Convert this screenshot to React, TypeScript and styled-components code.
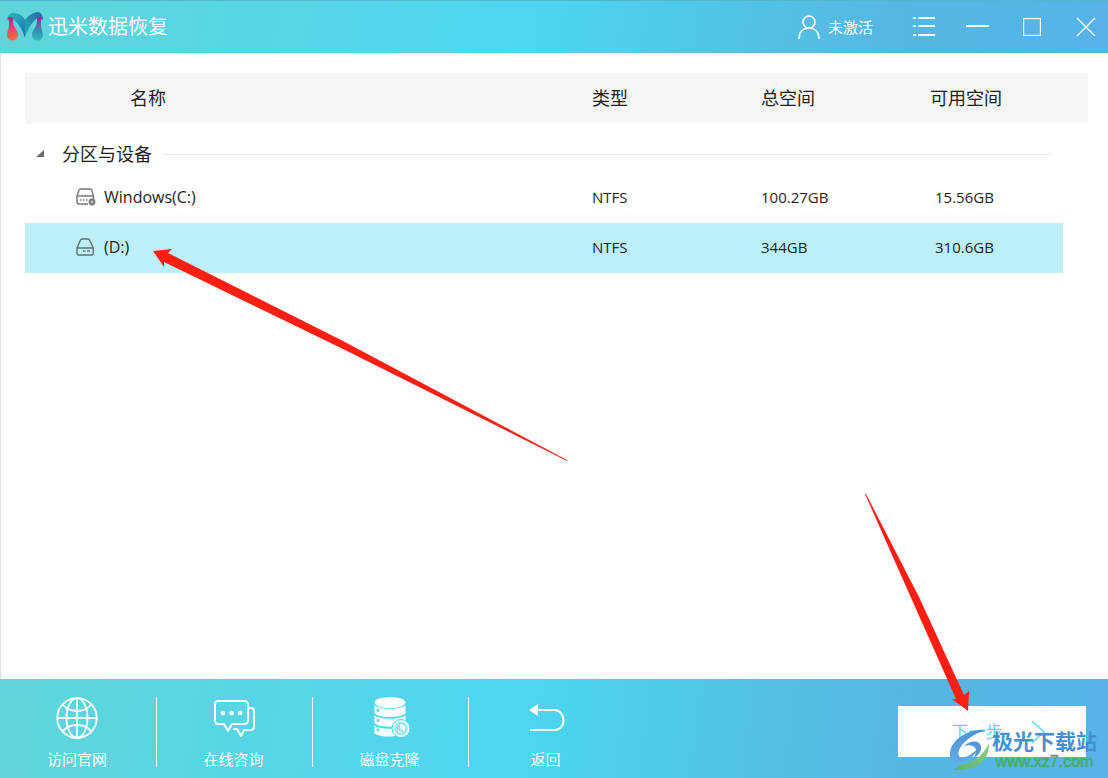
import React from "react";
import styled, { createGlobalStyle, css } from "styled-components";

const GlobalStyle = createGlobalStyle`
  *, *::before, *::after { box-sizing: border-box; }
  body {
    margin: 0;
    background: #fff;
    color: #1e1e1e;
    font-family: "Open Sans", "Noto Sans CJK SC", sans-serif;
  }
`;

const barGradient =
  "linear-gradient(98deg, #60d4d9 0%, #5ad5e1 16%, #4fd6ef 44%, #4dd2ee 52%, #52c4e5 66%, #56b6e1 82%, #57b3e9 100%)";

const Window = styled.div`
  position: relative;
  display: flex;
  flex-direction: column;
  min-height: 100vh;
  overflow: hidden;
`;

const TitleBar = styled.header`
  display: flex;
  align-items: center;
  height: 53px;
  padding: 0 8px 0 6px;
  border-top: 1px solid #52b6cf;
  background: ${barGradient};
  color: #fff;
`;

const AppTitle = styled.h1`
  flex: 1;
  margin: 0 0 0 4px;
  font-size: 20px;
  line-height: 28px;
  font-weight: 400;
`;

const plainButton = css`
  display: flex;
  align-items: center;
  justify-content: center;
  padding: 0;
  border: 0;
  background: none;
  color: inherit;
  font-family: inherit;
  cursor: pointer;
`;

const AccountButton = styled.button`
  ${plainButton}
  gap: 8px;
  margin-right: 37px;
  font-size: 15px;
  line-height: 20px;
  font-weight: 400;
`;

const WindowControls = styled.div`
  display: flex;
  gap: 26px;
`;

const ControlButton = styled.button`
  ${plainButton}
  width: 28px;
  height: 28px;
`;

const Content = styled.main`
  flex: 1;
  padding: 20px 20px 24px 24px;
  border-left: 1px solid #e2e2e2;
`;

const DriveTable = styled.table`
  width: 100%;
  border-collapse: collapse;
  table-layout: fixed;
`;

const NameCol = styled.col``;
const ValueCol = styled.col`
  width: 169px;
`;
const FreeCol = styled.col`
  width: 133px;
`;
const EdgeCol = styled.col`
  width: 25px;
`;

const HeadCell = styled.th<{ $indent?: number }>`
  height: 50px;
  padding: 0 0 0 ${(p) => p.$indent ?? 0}px;
  background: #f5f5f5;
  font-size: 18px;
  line-height: 24px;
  font-weight: 400;
  text-align: left;
`;

const GroupCell = styled.th`
  height: 50px;
  padding: 0 12px 0 10px;
  font-size: 18px;
  font-weight: 400;
  text-align: left;
`;

const GroupToggle = styled.button`
  ${plainButton}
  width: 100%;
  margin-top: 12px;
  font-size: 18px;
  line-height: 24px;

  &::after {
    content: "";
    flex: 1;
    height: 1px;
    margin-left: 10px;
    background: #ebebeb;
  }
`;

const GroupName = styled.span`
  margin-left: 16px;
`;

const DriveRow = styled.tr<{ $selected?: boolean }>`
  td:not(:last-child) {
    background: ${(p) => (p.$selected ? "#bdf0f6" : "transparent")};
  }
`;

const Cell = styled.td<{ $indent?: number }>`
  height: 50px;
  padding: 0 0 2px ${(p) => p.$indent ?? 0}px;
  font-size: 15px;
  line-height: 20px;
`;

const DriveName = styled.span`
  display: flex;
  align-items: center;
  gap: 8px;
  font-size: 16px;
`;

const BottomBar = styled.footer`
  display: flex;
  align-items: center;
  justify-content: space-between;
  height: 99px;
  padding-right: 22px;
  background: ${barGradient};
  color: #fff;
`;

const Tools = styled.nav`
  display: flex;
`;

const toolItem = css`
  ${plainButton}
  flex-direction: column;
  justify-content: flex-start;
  gap: 10px;
  width: 156px;
  height: 70px;
  margin-top: 6px;
  padding-right: 2px;
  font-size: 15px;
  line-height: 20px;
  font-weight: 400;
  text-decoration: none;

  svg {
    flex: none;
  }
`;

const ToolLink = styled.a`
  ${toolItem}
`;

const ToolButton = styled.button`
  ${toolItem}
  border-left: 1px solid #e6fafd;
`;

const NextButton = styled.button`
  ${plainButton}
  gap: 28px;
  width: 188px;
  height: 51px;
  margin-top: 6px;
  padding-left: 12px;
  background: #fff;
  color: #5fd6ec;
  font-size: 17px;
  line-height: 24px;
  font-weight: 400;
`;

const Pointer = styled.svg`
  position: absolute;
  pointer-events: none;
  fill: #ff1f12;
`;

const RowPointer = styled(Pointer)`
  left: 153px;
  top: 249px;
`;

const NextPointer = styled(Pointer)`
  right: 135px;
  bottom: 65px;
`;

const Watermark = styled.div`
  position: absolute;
  right: 11px;
  bottom: 7px;
  display: flex;
  align-items: center;
  gap: 1px;
  pointer-events: none;
`;

const WatermarkText = styled.div`
  display: flex;
  flex-direction: column;
  color: #4590d2;
  font-size: 21px;
  line-height: 24px;
  font-weight: 700;
`;

const WatermarkSite = styled.span`
  color: #46ad62;
  font-family: "Liberation Sans", Arial, sans-serif;
  font-size: 16px;
  line-height: 18px;
  font-weight: 400;
  text-align: center;
  -webkit-text-stroke: 0.5px #46ad62;
`;

const Logo = () => (
  <svg width="38" height="32" viewBox="0 0 38 32" aria-hidden="true">
    <defs>
      <linearGradient id="wingL" x1="0" y1="0" x2="1" y2="1">
        <stop offset="0" stopColor="#1fc2b8" />
        <stop offset="0.5" stopColor="#2a96bb" />
        <stop offset="1" stopColor="#2470ad" />
      </linearGradient>
      <linearGradient id="wingR" x1="0" y1="1" x2="1" y2="0">
        <stop offset="0" stopColor="#25b7b9" />
        <stop offset="1" stopColor="#2863a9" />
      </linearGradient>
      <linearGradient id="dropL" x1="0" y1="0" x2="0" y2="1">
        <stop offset="0" stopColor="#b01f91" />
        <stop offset="0.45" stopColor="#ee3c78" />
        <stop offset="1" stopColor="#fb7138" />
      </linearGradient>
      <linearGradient id="dropR" x1="0" y1="0" x2="0" y2="1">
        <stop offset="0" stopColor="#a3248f" />
        <stop offset="0.45" stopColor="#447daf" />
        <stop offset="1" stopColor="#25beb6" />
      </linearGradient>
    </defs>
    <path d="M1 9C1 4 5 1 9 2C14 3 18 6 19 9V27C17 20 13 13 7 8Z" fill="url(#wingL)" />
    <path d="M19 27V9C22 5 27 1 32 1C36 2 37 5 37 9L32 7C26 10 22 18 19 27Z" fill="url(#wingR)" />
    <path d="M2 6C5 5 7 6 7 9C7 17 12 18 12 24A5.500 5.500 0 0 1 1 24C1 19 5 16 2 6Z" fill="url(#dropL)" />
    <path d="M36 6C33 5 31 6 31 9C31 17 26 18 26 24A5.500 5.500 0 0 0 37 24C37 19 33 16 36 6Z" fill="url(#dropR)" />
  </svg>
);

const UserIcon = () => (
  <svg width="22" height="26" viewBox="0 0 22 26" fill="none" stroke="currentColor" strokeWidth="1.7" aria-hidden="true">
    <circle cx="11" cy="8" r="6" />
    <path d="M1 25C1 18 5 14 11 14S21 18 21 25" />
  </svg>
);

const MenuIcon = () => (
  <svg width="24" height="22" viewBox="0 0 24 22" fill="none" stroke="currentColor" strokeWidth="2" aria-hidden="true">
    <path d="M6 2H23M6 10H23M6 19H23M1 2H4M1 10H4M1 19H4" />
  </svg>
);

const MinimizeIcon = () => (
  <svg width="24" height="22" viewBox="0 0 24 22" stroke="currentColor" strokeWidth="2" aria-hidden="true">
    <path d="M0 10H23" />
  </svg>
);

const MaximizeIcon = () => (
  <svg width="18" height="18" viewBox="0 0 18 18" fill="none" stroke="currentColor" strokeWidth="1.2" aria-hidden="true">
    <rect x="0.6" y="0.6" width="16.8" height="16.8" />
  </svg>
);

const CloseIcon = () => (
  <svg width="20" height="20" viewBox="0 0 20 20" stroke="currentColor" strokeWidth="1.4" aria-hidden="true">
    <path d="M1 1L19 19M19 1L1 19" />
  </svg>
);

const ExpandedIcon = () => (
  <svg width="11" height="9" viewBox="0 0 11 9" aria-hidden="true">
    <path d="M1 7L9 0V7Z" fill="#6b6b6b" />
  </svg>
);

const SystemDriveIcon = () => (
  <svg width="20" height="18" viewBox="0 0 20 18" fill="none" stroke="#777" strokeWidth="1.4" aria-hidden="true">
    <path d="M1 8L3 2Q3.300 1 5 1H14Q15.400 1 15.700 2L17.500 8M1 8H17.500V11M1 8V14Q1 16 3 16H12" />
    <path d="M4 12H5.500M7 12H8.500M10 12H11.500" />
    <circle cx="16" cy="14" r="2.600" fill="#999" strokeWidth="1.600" />
    <circle cx="16" cy="14" r="0.700" fill="#fff" stroke="none" />
  </svg>
);

const DriveIcon = () => (
  <svg width="20" height="18" viewBox="0 0 20 18" fill="none" stroke="#607176" strokeWidth="1.4" aria-hidden="true">
    <path d="M1 10L4.500 2Q5 1 6 1H12Q13 1 13.500 2L17.300 10V15Q17.300 17 15.500 17H3Q1 17 1 15ZM1 10H17" />
    <path d="M7 13H9.500M11 13H14" />
  </svg>
);

const GlobeIcon = () => (
  <svg width="42" height="42" viewBox="0 0 42 42" fill="none" stroke="currentColor" strokeWidth="1.8" aria-hidden="true">
    <circle cx="21" cy="21" r="19.800" />
    <ellipse cx="21" cy="21" rx="10.500" ry="19.800" />
    <path d="M21 1V41M1 21H41M7 8C14 16 28 16 35 8M7 34C14 26 28 26 35 34" />
  </svg>
);

const ChatIcon = () => (
  <svg width="42" height="42" viewBox="0 0 42 42" fill="none" stroke="currentColor" strokeWidth="2" strokeLinejoin="round" aria-hidden="true">
    <path d="M5 4H31Q35 4 35 8V23Q35 27 31 27H19L15 34L11 27H5Q2 27 2 23V8Q2 4 5 4Z" />
    <path d="M36 11H38Q41 11 41 14V29Q41 33 38 33H31L28 39L24 32H20" />
    <g fill="currentColor" stroke="none">
      <circle cx="10" cy="16" r="2.300" />
      <circle cx="18.500" cy="16" r="2.300" />
      <circle cx="27" cy="16" r="2.300" />
    </g>
  </svg>
);

const CloneIcon = () => (
  <svg width="42" height="42" viewBox="0 0 42 42" aria-hidden="true">
    <g fill="currentColor">
      <ellipse cx="21" cy="5.500" rx="15.500" ry="5.500" />
      <path d="M5.500 8C9 13 33 13 36.500 8V16C33 21.500 9 21.500 5.500 16Z" />
      <path d="M5.500 18C9 23 33 23 36.500 18V25C33 31 9 31 5.500 26Z" />
      <path d="M5.500 28C9 33 33 33 36.500 28V34C33 41 9 41 5.500 36Z" />
    </g>
    <g fill="#4fd4ed">
      <circle cx="9" cy="13.500" r="1.400" />
      <circle cx="9" cy="23.500" r="1.400" />
      <circle cx="9" cy="33" r="1.400" />
    </g>
    <circle cx="32" cy="31.500" r="9" fill="#fff" stroke="#4fd4ed" />
    <circle cx="32" cy="31.500" r="7" fill="#a8eaf6" />
    <path d="M30.500 27H34L36.500 29.500V34H30.500ZM30 29H28.500V36H34V34.500" fill="#fff" stroke="#79dcf0" strokeWidth="0.800" />
  </svg>
);

const BackIcon = () => (
  <svg width="42" height="42" viewBox="0 0 42 42" fill="none" stroke="currentColor" strokeWidth="2.200" aria-hidden="true">
    <path d="M10 13H29C35 13 38.500 18 38.500 23.500S35 33 29 33H5" />
    <path d="M4 13L13 7V19Z" fill="currentColor" stroke="none" />
  </svg>
);

const NextIcon = () => (
  <svg width="14" height="24" viewBox="0 0 14 24" fill="none" stroke="currentColor" strokeWidth="1.5" aria-hidden="true">
    <path d="M1 1L13 12L1 23" />
  </svg>
);

const WatermarkLogo = () => (
  <svg width="42" height="42" viewBox="0 0 42 42" aria-hidden="true">
    <defs>
      <linearGradient id="swirl" x1="0" y1="0" x2="0" y2="1">
        <stop offset="0" stopColor="#4c93d6" />
        <stop offset="1" stopColor="#68a9e3" />
      </linearGradient>
      <linearGradient id="leaf" x1="0" y1="1" x2="1" y2="0">
        <stop offset="0" stopColor="#59b36a" />
        <stop offset="1" stopColor="#8fd27c" />
      </linearGradient>
    </defs>
    <path d="M38 1C22 -1 3 9 1 23C0 30 3 34 9 34C18 33 27 27 29 19C23 26 15 30 11 28C5 23 17 6 38 1Z" fill="url(#swirl)" />
    <path d="M15 17C22 11 31 11 32 18C33 23 28 27 24 30C28 24 28 19 24 17C21 16 18 16 15 17Z" fill="#5399da" />
    <path d="M40 14C41 31 28 42 4 41L11 36C24 35 33 28 40 14Z" fill="url(#leaf)" />
  </svg>
);

const drives = [
  { name: "Windows(C:)", type: "NTFS", total: "100.27GB", free: "15.56GB", icon: <SystemDriveIcon />, selected: false },
  { name: "(D:)", type: "NTFS", total: "344GB", free: "310.6GB", icon: <DriveIcon />, selected: true },
];

export default function App() {
  return (
    <Window>
      <GlobalStyle />
      <TitleBar>
        <Logo />
        <AppTitle>迅米数据恢复</AppTitle>
        <AccountButton type="button">
          <UserIcon />
          未激活
        </AccountButton>
        <WindowControls>
          <ControlButton type="button" aria-label="菜单"><MenuIcon /></ControlButton>
          <ControlButton type="button" aria-label="最小化"><MinimizeIcon /></ControlButton>
          <ControlButton type="button" aria-label="最大化"><MaximizeIcon /></ControlButton>
          <ControlButton type="button" aria-label="关闭"><CloseIcon /></ControlButton>
        </WindowControls>
      </TitleBar>

      <Content>
        <DriveTable>
          <colgroup>
            <NameCol />
            <ValueCol />
            <ValueCol />
            <FreeCol />
            <EdgeCol />
          </colgroup>
          <thead>
            <tr>
              <HeadCell scope="col" $indent={105}>名称</HeadCell>
              <HeadCell scope="col">类型</HeadCell>
              <HeadCell scope="col">总空间</HeadCell>
              <HeadCell scope="col" colSpan={2}>可用空间</HeadCell>
            </tr>
          </thead>
          <tbody>
            <tr>
              <GroupCell scope="rowgroup" colSpan={4}>
                <GroupToggle type="button" aria-expanded="true">
                  <ExpandedIcon />
                  <GroupName>分区与设备</GroupName>
                </GroupToggle>
              </GroupCell>
              <td />
            </tr>
            {drives.map((drive) => (
              <DriveRow key={drive.name} $selected={drive.selected} aria-selected={drive.selected}>
                <Cell $indent={51}>
                  <DriveName>
                    {drive.icon}
                    {drive.name}
                  </DriveName>
                </Cell>
                <Cell>{drive.type}</Cell>
                <Cell>{drive.total}</Cell>
                <Cell $indent={5}>{drive.free}</Cell>
                <td />
              </DriveRow>
            ))}
          </tbody>
        </DriveTable>
      </Content>

      <BottomBar>
        <Tools>
          <ToolLink href="#website"><GlobeIcon />访问官网</ToolLink>
          <ToolButton type="button"><ChatIcon />在线咨询</ToolButton>
          <ToolButton type="button"><CloneIcon />磁盘克隆</ToolButton>
          <ToolButton type="button"><BackIcon />返回</ToolButton>
        </Tools>
        <NextButton type="button">
          下一步
          <NextIcon />
        </NextButton>
      </BottomBar>

      <RowPointer width="415" height="213" viewBox="0 0 415 213" aria-hidden="true">
        <path d="M0 2L19 0L15 4L190 92L414 211V212L188 99L11 13L11 18Z" />
      </RowPointer>
      <NextPointer width="108" height="220" viewBox="0 0 108 220" aria-hidden="true">
        <path d="M0 1L1 1L54 104L99 202L104 198L103 218L87 206L91 206L47 107Z" />
      </NextPointer>

      <Watermark>
        <WatermarkLogo />
        <WatermarkText>
          极光下载站
          <WatermarkSite>www.xz7.com</WatermarkSite>
        </WatermarkText>
      </Watermark>
    </Window>
  );
}
